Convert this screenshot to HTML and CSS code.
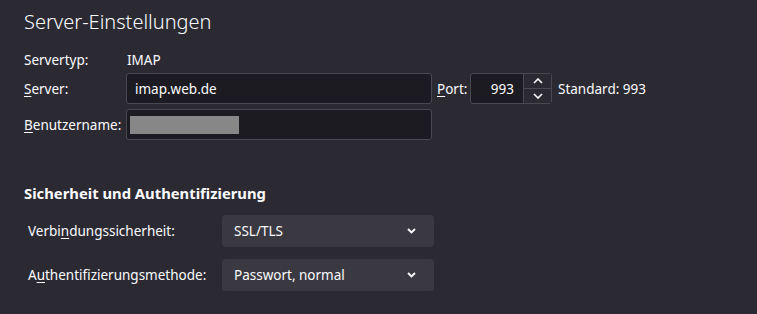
FILE: index.html
```html
<!DOCTYPE html>
<html>
<head>
    <link rel="stylesheet" href="styles.css">
</head>
<body>
    <div class="page">
        <h1 class="title">Server-Einstellungen</h1>

        <div class="server-grid">
            <div class="row row-static">
                <span class="label">Servertyp:</span>
                <span class="value">IMAP</span>
            </div>
            <div class="row">
                <label class="label" for="serverName"><u>S</u>erver:</label>
                <div class="text-input wide">imap.web.de</div>
                <label class="port-label" for="port"><u>P</u>ort:</label>
                <div class="number-input">
                    <span class="number-value">993</span>
                    <div class="spinner">
                        <span class="spin-btn">
                            <svg width="10" height="6" viewBox="0 0 10 6"><path d="M1 5 L5 1 L9 5" fill="none" stroke="#fbfbfe" stroke-width="1.6"/></svg>
                        </span>
                        <span class="spin-btn">
                            <svg width="10" height="6" viewBox="0 0 10 6"><path d="M1 1 L5 5 L9 1" fill="none" stroke="#fbfbfe" stroke-width="1.6"/></svg>
                        </span>
                    </div>
                </div>
                <span class="default-port">Standard: 993</span>
            </div>
            <div class="row">
                <label class="label" for="userName"><u>B</u>enutzername:</label>
                <div class="text-input wide">
                    <span class="redacted"></span>
                </div>
            </div>
        </div>

        <h2 class="section-title">Sicherheit und Authentifizierung</h2>

        <div class="security-grid">
            <div class="select-row">
                <label class="select-label">Verbi<u>n</u>dungssicherheit:</label>
                <div class="select">
                    <span>SSL/TLS</span>
                    <svg width="9" height="6" viewBox="0 0 9 6"><path d="M1 1 L4.5 4.5 L8 1" fill="none" stroke="#fbfbfe" stroke-width="1.8"/></svg>
                </div>
            </div>
            <div class="select-row">
                <label class="select-label">A<u>u</u>thentifizierungsmethode:</label>
                <div class="select">
                    <span>Passwort, normal</span>
                    <svg width="9" height="6" viewBox="0 0 9 6"><path d="M1 1 L4.5 4.5 L8 1" fill="none" stroke="#fbfbfe" stroke-width="1.8"/></svg>
                </div>
            </div>
        </div>
    </div>
</body>
</html>
```

FILE: styles.css
```css
body {
    margin: 0;
    background-color: #2b2a33;
    color: #fbfbfe;
    font-family: "Noto Sans", "Open Sans", sans-serif;
    font-size: 13.5px;
}

.page {
    padding: 7px 0 0 24px;
}

.title {
    margin: 0;
    font-size: 20px;
    font-weight: 300;
    line-height: 30px;
}

.server-grid {
    margin-top: 14px;
    display: flex;
    flex-direction: column;
    gap: 5px;
}

.row {
    display: flex;
    align-items: center;
    height: 31px;
}

.row-static {
    height: 18px;
    margin-bottom: -1px;
}

.label {
    width: 102px;
}

.value {
    padding-left: 1px;
}

u {
    text-decoration-thickness: 1px;
    text-underline-offset: 2px;
}

.text-input {
    box-sizing: border-box;
    height: 31px;
    background-color: #1c1b22;
    border: 1px solid #4a4952;
    border-radius: 3px;
    display: flex;
    align-items: center;
    padding-left: 8px;
}

.wide {
    width: 306px;
}

.redacted {
    display: block;
    width: 109px;
    height: 18px;
    margin-left: -5px;
    background-color: #878787;
}

.port-label {
    margin-left: 5px;
    width: 33px;
}

.number-input {
    box-sizing: border-box;
    width: 82px;
    height: 31px;
    background-color: #1c1b22;
    border: 1px solid #4a4952;
    border-radius: 3px;
    display: flex;
    align-items: center;
}

.number-value {
    flex: 1;
    text-align: right;
    padding-right: 9px;
}

.spinner {
    box-sizing: border-box;
    width: 28px;
    height: 29px;
    border-left: 1px solid #4a4952;
    display: flex;
    flex-direction: column;
}

.spin-btn {
    flex: 1;
    display: flex;
    align-items: center;
    justify-content: center;
    background-color: #2b2a33;
}

.spin-btn + .spin-btn {
    border-top: 1px solid #4a4952;
}

.default-port {
    margin-left: 6px;
}

.section-title {
    margin: 43px 0 0;
    font-size: 14.8px;
    font-weight: 700;
    line-height: 20px;
}

.security-grid {
    margin-top: 12px;
    padding-left: 4px;
    display: flex;
    flex-direction: column;
    gap: 12px;
}

.select-row {
    display: flex;
    align-items: center;
}

.select-label {
    width: 194px;
}

.select {
    box-sizing: border-box;
    width: 212px;
    height: 32px;
    background-color: #3a3941;
    border-radius: 4px;
    display: flex;
    align-items: center;
    justify-content: space-between;
    padding: 0 18px 0 12px;
}
```
